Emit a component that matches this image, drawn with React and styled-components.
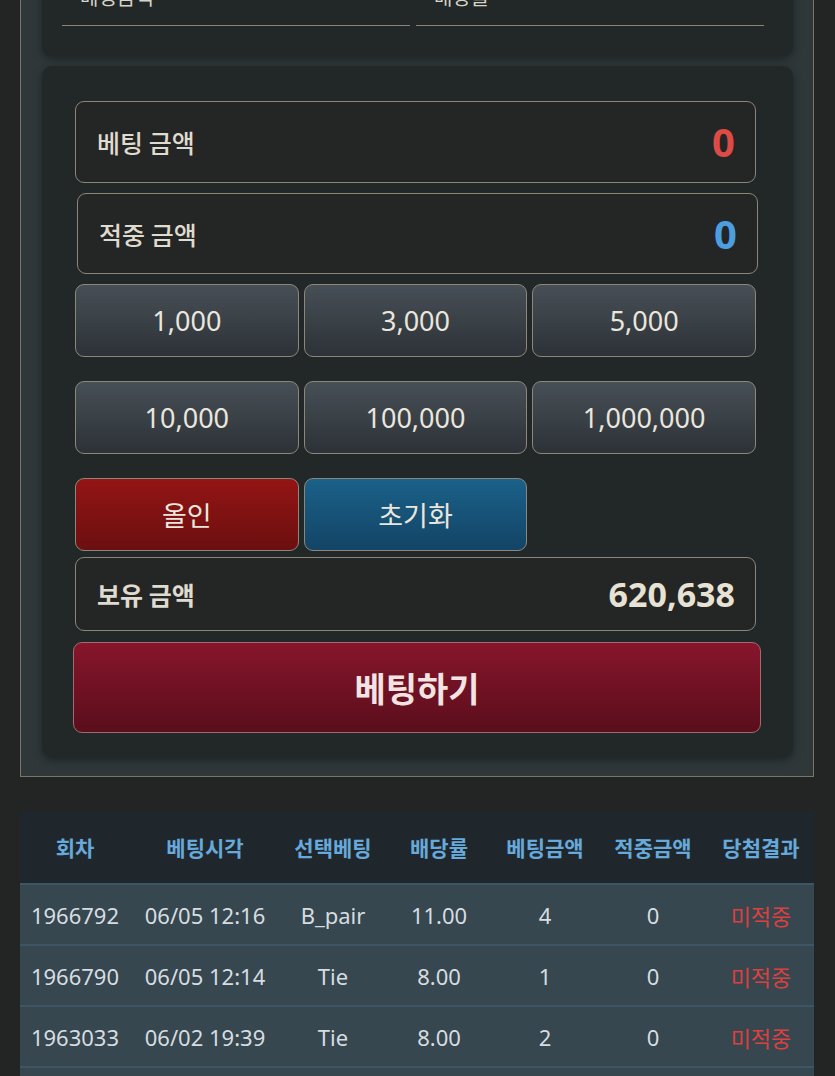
import React from 'react'
import styled, { createGlobalStyle } from 'styled-components'

const GlobalStyle = createGlobalStyle`
    *, *::before, *::after {
        box-sizing: border-box;
    }
    body {
        margin: 0;
        background: #232525;
        font-family: 'Noto Sans', 'Noto Sans CJK KR', sans-serif;
        color: #e4e0d6;
    }
`

const Page = styled.div`
    margin-top: -67px;
    padding: 0 21px 0 20px;
`

const Frame = styled.div`
    border: 1px solid #7a766b;
    background: #2f3739;
    padding: 21px 20px 19px 21px;
    display: flex;
    flex-direction: column;
    gap: 10px;
`

const Panel = styled.div`
    background: #222727;
    border-radius: 10px;
    box-shadow: 0 3px 8px rgba(0, 0, 0, 0.35);
`

const FieldPanel = styled(Panel)`
    display: grid;
    grid-template-columns: 1fr 1fr;
    gap: 6px;
    padding: 20px 29px 30px 20px;
`

const Field = styled.div`
    border-bottom: 1px solid #8a8579;
    padding: 10px 18px 16px;
    font-family: 'Noto Sans CJK KR', sans-serif;
    font-size: 20px;
    line-height: 24px;
    color: #d8d4ca;
`

const BetPanel = styled(Panel)`
    padding: 35px 37px 24px 33px;
    display: flex;
    flex-direction: column;
`

const AmountBox = styled.div`
    display: flex;
    align-items: center;
    justify-content: space-between;
    height: ${(p) => p.$h || 80}px;
    margin-left: ${(p) => p.$shift || 0}px;
    margin-right: ${(p) => -(p.$shift || 0)}px;
    margin-bottom: ${(p) => p.$mb || 0}px;
    padding: 0 20px 0 21px;
    border: 1px solid #8a8579;
    border-radius: 9px;
    background: #242626;
`

const AmountLabel = styled.span`
    font-family: 'Noto Sans CJK KR', sans-serif;
    font-size: 25px;
    font-weight: ${(p) => (p.$bold ? 700 : 500)};
    color: #e0dbcf;
`

const AmountValue = styled.span`
    font-family: 'Noto Sans', sans-serif;
    font-weight: 700;
    font-size: ${(p) => p.$size || 40}px;
    line-height: 1;
    color: ${(p) => p.$color || '#e8e2d4'};
`

const ChipGrid = styled.div`
    display: grid;
    grid-template-columns: repeat(3, 1fr);
    column-gap: 5px;
    margin-bottom: ${(p) => p.$mb || 0}px;
`

const Chip = styled.button`
    height: 73px;
    border: 1px solid #8c877a;
    border-radius: 9px;
    background: ${(p) =>
        p.$tone === 'red'
            ? 'linear-gradient(#931514, #6c0f10)'
            : p.$tone === 'blue'
            ? 'linear-gradient(#1b6189, #134466)'
            : 'linear-gradient(#474f56, #2c3237)'};
    color: #ebe6dd;
    font-family: 'Noto Sans', 'Noto Sans CJK KR', sans-serif;
    font-size: 27px;
    padding: 0;
    cursor: pointer;
`

const BetButton = styled.button`
    height: 91px;
    margin: 0 -5px 0 -2px;
    border: 1px solid #a26a6e;
    border-radius: 9px;
    background: linear-gradient(#87152b, #5a0e1c);
    color: #f2e4e2;
    font-family: 'Noto Sans CJK KR', sans-serif;
    font-weight: 700;
    font-size: 34px;
    cursor: pointer;
`

const Table = styled.table`
    width: 794px;
    margin: 34px 0 0;
    border-collapse: collapse;
    table-layout: fixed;
`

const HeadCell = styled.th`
    height: 73px;
    background: #1f272d;
    color: #66a9da;
    font-family: 'Noto Sans CJK KR', sans-serif;
    font-size: 21px;
    font-weight: 700;
    padding: 0;
    text-align: center;
`

const Row = styled.tr`
    background: #36474f;
    border-top: 2px solid #3e5564;
`

const Cell = styled.td`
    height: 61px;
    padding: 0;
    text-align: center;
    font-size: 22px;
    color: ${(p) => (p.$lose ? '#dd4040' : '#d6dde1')};
`

const chips = [
    ['1,000', '3,000', '5,000'],
    ['10,000', '100,000', '1,000,000'],
]

const columns = [
    ['회차', 110],
    ['베팅시각', 150],
    ['선택베팅', 106],
    ['배당률', 106],
    ['베팅금액', 106],
    ['적중금액', 110],
    ['당첨결과', 106],
]

const history = [
    ['1966792', '06/05 12:16', 'B_pair', '11.00', '4', '0', '미적중'],
    ['1966790', '06/05 12:14', 'Tie', '8.00', '1', '0', '미적중'],
    ['1963033', '06/02 19:39', 'Tie', '8.00', '2', '0', '미적중'],
    ['1963030', '06/02 19:36', 'Player', '2.00', '1', '0', '미적중'],
]

export default function App() {
    return (
        <>
            <GlobalStyle />
            <Page>
                <Frame>
                    <FieldPanel>
                        <Field>베팅금액</Field>
                        <Field>배당률</Field>
                    </FieldPanel>
                    <BetPanel>
                        <AmountBox $h={82} $mb={10}>
                            <AmountLabel>베팅 금액</AmountLabel>
                            <AmountValue $color="#de4a45">0</AmountValue>
                        </AmountBox>
                        <AmountBox $h={81} $shift={2} $mb={10}>
                            <AmountLabel>적중 금액</AmountLabel>
                            <AmountValue $color="#4c9ee0">0</AmountValue>
                        </AmountBox>
                        {chips.map((row, i) => (
                            <ChipGrid key={i} $mb={24}>
                                {row.map((c) => (
                                    <Chip key={c}>{c}</Chip>
                                ))}
                            </ChipGrid>
                        ))}
                        <ChipGrid $mb={6}>
                            <Chip $tone="red">올인</Chip>
                            <Chip $tone="blue">초기화</Chip>
                        </ChipGrid>
                        <AmountBox $h={74} $mb={11}>
                            <AmountLabel $bold>보유 금액</AmountLabel>
                            <AmountValue $size={34}>620,638</AmountValue>
                        </AmountBox>
                        <BetButton>베팅하기</BetButton>
                    </BetPanel>
                </Frame>
                <Table>
                    <colgroup>
                        {columns.map(([name, w]) => (
                            <col key={name} style={{ width: w }} />
                        ))}
                    </colgroup>
                    <thead>
                        <tr>
                            {columns.map(([name]) => (
                                <HeadCell key={name}>{name}</HeadCell>
                            ))}
                        </tr>
                    </thead>
                    <tbody>
                        {history.map((r) => (
                            <Row key={r[0]}>
                                {r.map((v, i) => (
                                    <Cell key={i} $lose={i === 6}>
                                        {v}
                                    </Cell>
                                ))}
                            </Row>
                        ))}
                    </tbody>
                </Table>
            </Page>
        </>
    )
}
